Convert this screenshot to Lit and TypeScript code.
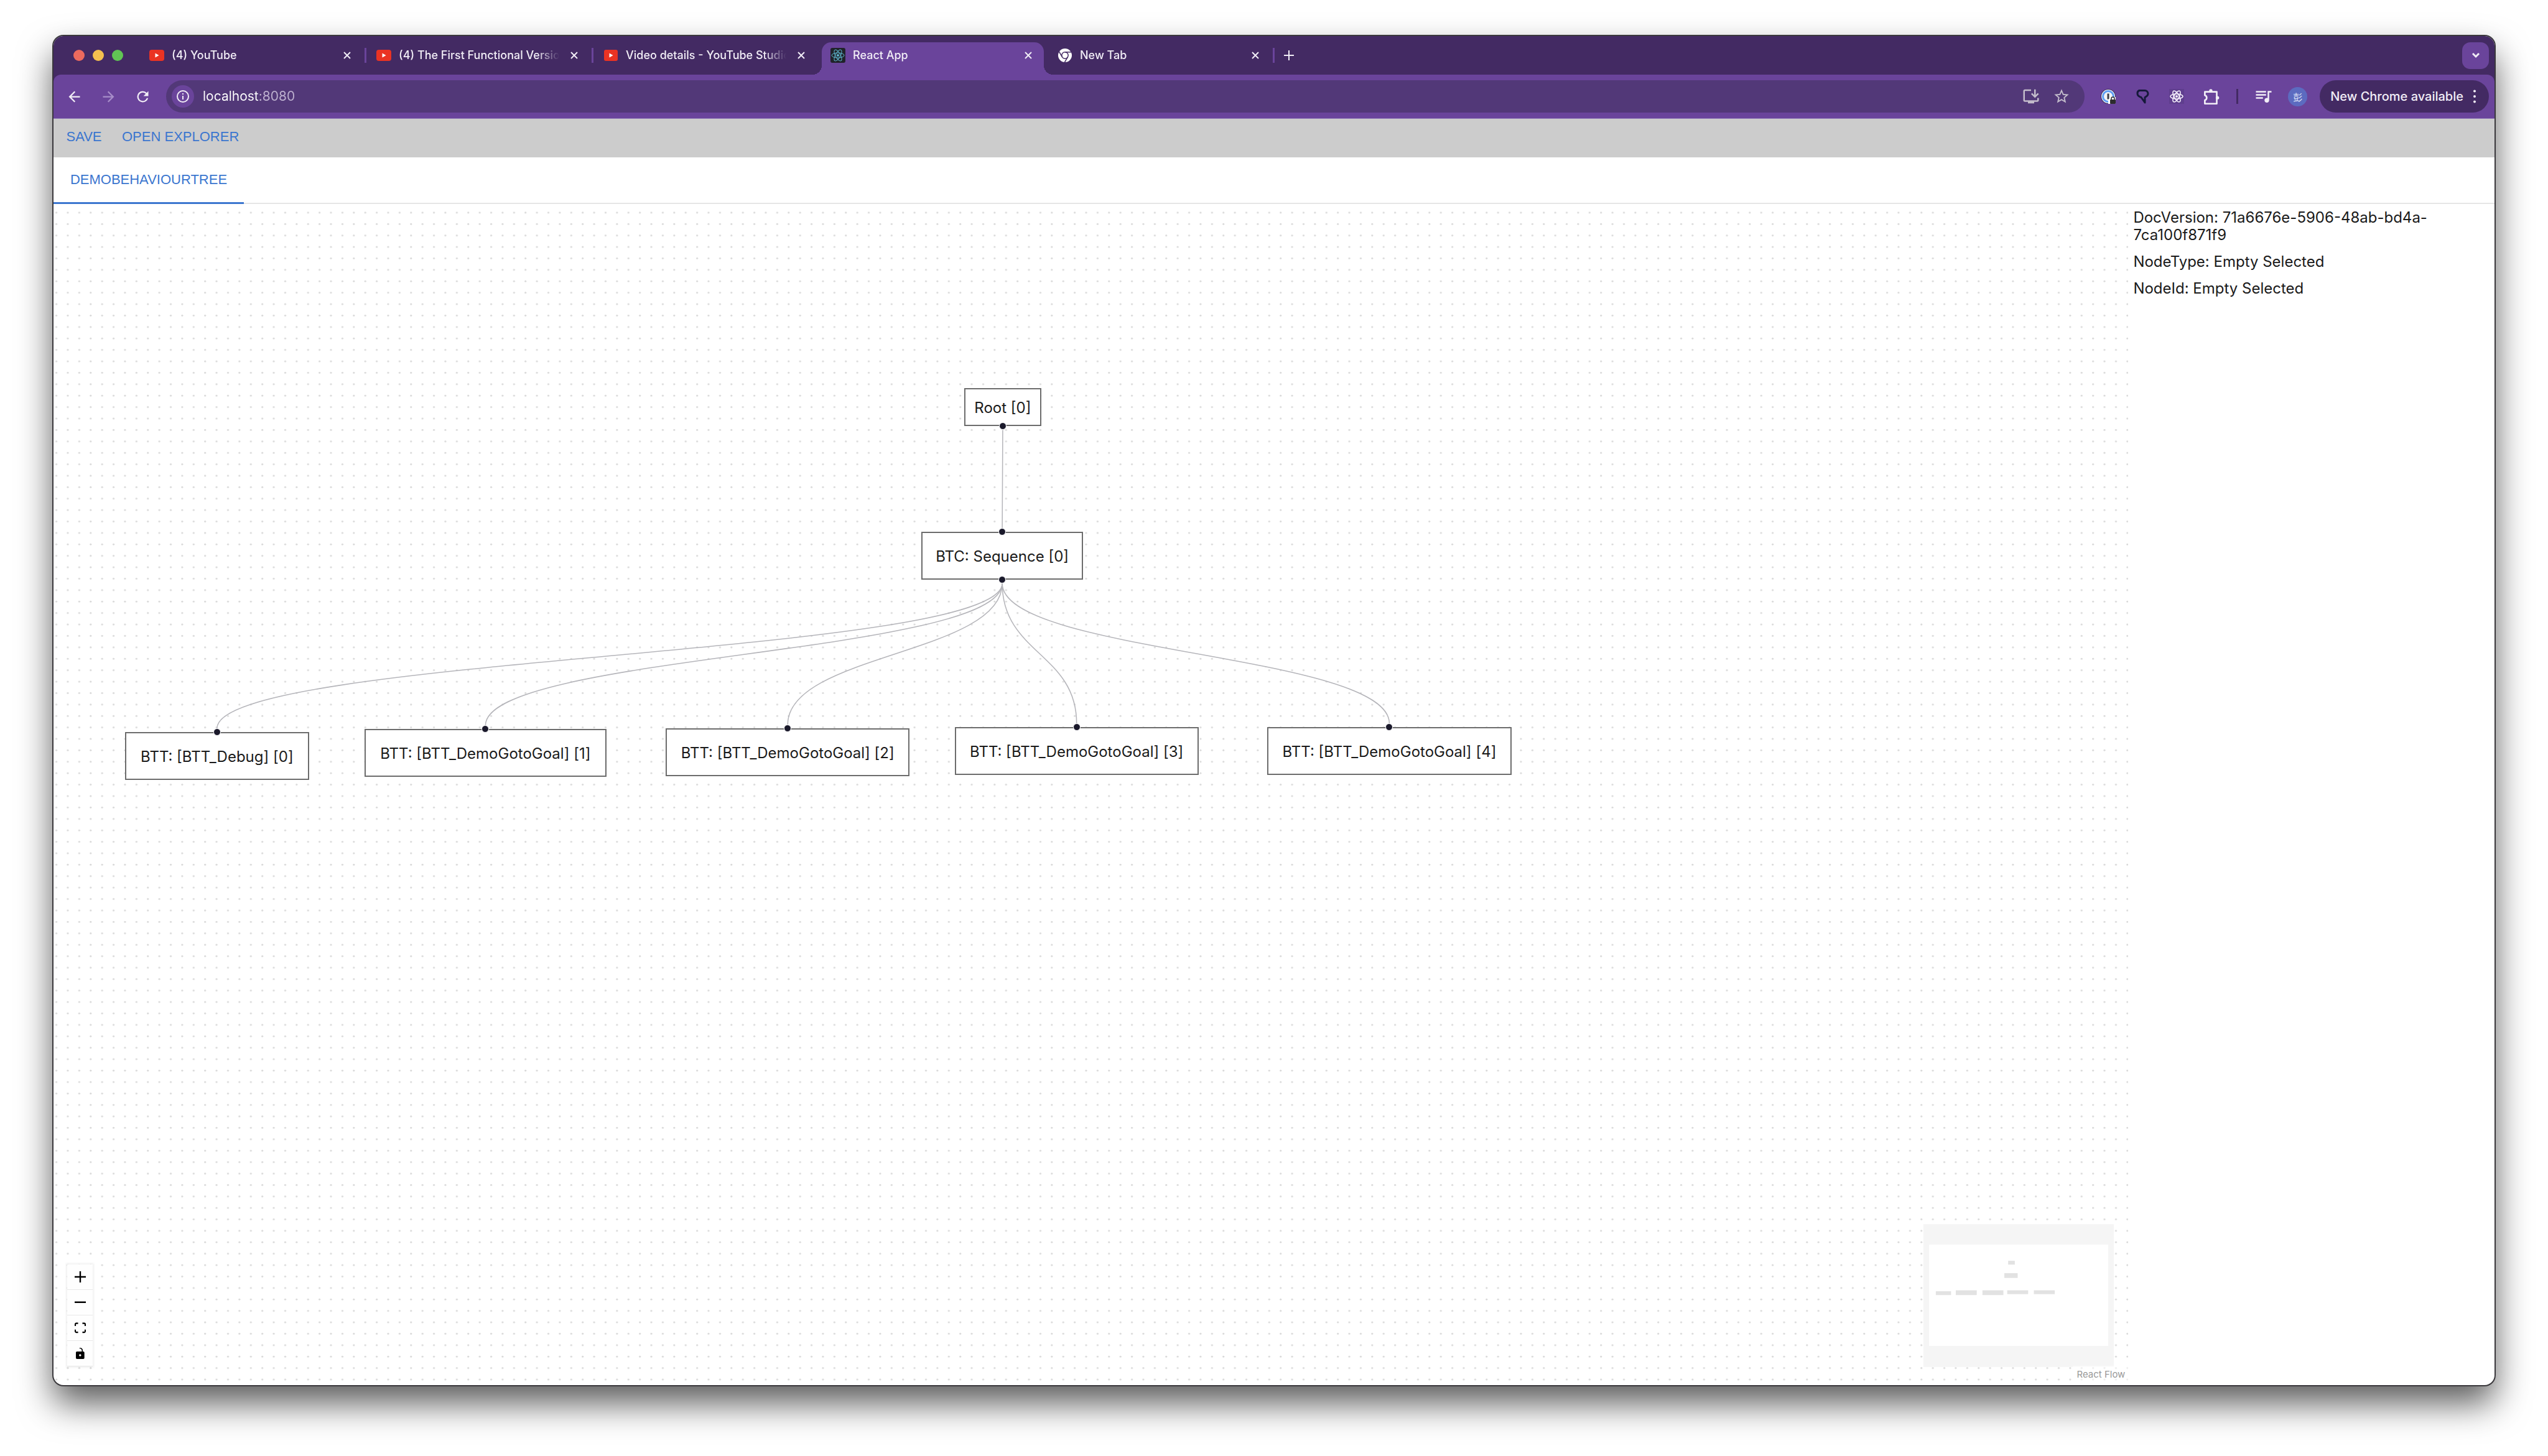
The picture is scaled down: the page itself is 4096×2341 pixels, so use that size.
import { LitElement, html, svg, css } from "lit";
import { customElement, state } from "lit/decorators.js";
import { classMap } from "lit/directives/class-map.js";
import { styleMap } from "lit/directives/style-map.js";

/* ---------- icons ---------- */

const solid = (d: string, cls = "i27") =>
  html`<svg class=${cls} viewBox="0 0 24 24" fill="currentColor" aria-hidden="true"><path d=${d}></path></svg>`;

const backIcon = solid("M20 11H7.83l5.59-5.59L12 4l-8 8 8 8 1.41-1.41L7.83 13H20z");
const forwardIcon = solid("M4 11h12.17l-5.59-5.59L12 4l8 8-8 8-1.41-1.41L16.17 13H4z");
const reloadIcon = solid(
  "M17.65 6.35A7.958 7.958 0 0 0 12 4a8 8 0 1 0 7.73 10h-2.08A6 6 0 1 1 12 6c1.66 0 3.14.69 4.22 1.78L13 11h7V4z"
);
const installIcon = solid(
  "M20 17H4V5h8V3H4c-1.1 0-2 .9-2 2v12c0 1.1.9 2 2 2h4v2h8v-2h4c1.1 0 2-.9 2-2v-3h-2v3zM17 14l5-5-1.41-1.41L18 10.17V3h-2v7.17l-2.59-2.58L12 9z",
  "i30"
);
const starIcon = solid(
  "M22 9.24l-7.19-.62L12 2 9.19 8.63 2 9.24l5.46 4.73L5.82 21 12 17.27 18.18 21l-1.63-7.03L22 9.24zM12 15.4l-3.76 2.27 1-4.28-3.32-2.88 4.38-.38L12 6.1l1.71 4.04 4.38.38-3.32 2.88 1 4.28L12 15.4z",
  "i28"
);
const playlistIcon = solid(
  "M15 5H2v2h13V5zm0 4H2v2h13V9zM2 15h9v-2H2v2zM17 5v9.18c-.31-.11-.65-.18-1-.18-1.66 0-3 1.34-3 3s1.34 3 3 3 3-1.34 3-3V7h3V5h-5z",
  "i30"
);
const infoIcon = html`<svg class="i24" viewBox="0 0 24 24" aria-hidden="true">
  <circle cx="12" cy="12" r="9" fill="none" stroke="currentColor" stroke-width="2"></circle>
  <rect x="11" y="11" width="2" height="6" fill="currentColor"></rect>
  <rect x="11" y="7" width="2" height="2" fill="currentColor"></rect>
</svg>`;
const closeIcon = html`<svg class="i12" viewBox="0 0 12 12" aria-hidden="true">
  <path d="M1 1l10 10M11 1L1 11" fill="none" stroke="currentColor" stroke-width="2"></path>
</svg>`;
const plusIcon = html`<svg class="i16" viewBox="0 0 16 16" aria-hidden="true">
  <path d="M8 0v16M0 8h16" fill="none" stroke="currentColor" stroke-width="2"></path>
</svg>`;
const chevronIcon = html`<svg class="i16" viewBox="0 0 16 16" aria-hidden="true">
  <path d="M3 5l5 5 5-5" fill="none" stroke="currentColor" stroke-width="3"></path>
</svg>`;
const dotsIcon = html`<svg class="i24" viewBox="0 0 24 24" fill="currentColor" aria-hidden="true">
  <circle cx="12" cy="3.500" r="2"></circle><circle cx="12" cy="12" r="2"></circle><circle cx="12" cy="20.500" r="2"></circle>
</svg>`;

const youtubeIcon = html`<svg class="i24" viewBox="0 0 24 24" aria-hidden="true">
  <rect x="0" y="3" width="24" height="18" rx="4" fill="#ea3323"></rect>
  <path d="M9.500 8.500v7l6-3.500z" fill="#fff"></path>
</svg>`;
const studioIcon = html`<svg class="i24" viewBox="0 0 24 24" aria-hidden="true">
  <rect x="1" y="3" width="22" height="18" rx="3" fill="#ea3323"></rect>
  <path d="M9.500 8.500v7l6-3.500z" fill="#fff"></path>
</svg>`;
const orbits = svg`
  <ellipse cx="12" cy="12" rx="10" ry="4"></ellipse>
  <ellipse cx="12" cy="12" rx="10" ry="4" transform="rotate(60 12 12)"></ellipse>
  <ellipse cx="12" cy="12" rx="10" ry="4" transform="rotate(120 12 12)"></ellipse>`;
const reactIcon = html`<svg class="i24" viewBox="0 0 24 24" aria-hidden="true">
  <rect width="24" height="24" rx="3" fill="#20232a"></rect>
  <g fill="none" stroke="#5fb8d0" stroke-width="1">${orbits}</g>
  <circle cx="12" cy="12" r="2" fill="#5fb8d0"></circle>
</svg>`;
const chromeIcon = html`<svg class="i24" viewBox="0 0 24 24" aria-hidden="true">
  <circle cx="12" cy="12" r="11" fill="#fff"></circle>
  <g fill="none" stroke="#432a63" stroke-width="1.500">
    <circle cx="12" cy="12" r="5.200"></circle>
    <path d="M12 6.800H22M7.500 14.600L2.500 6M16.500 14.600L11.500 23"></path>
  </g>
</svg>`;
const vaultIcon = html`<svg class="i24" viewBox="0 0 24 24" aria-hidden="true">
  <circle cx="12" cy="12" r="12" fill="#3b2b57"></circle>
  <circle cx="12" cy="12" r="11" fill="#f2f3f5"></circle>
  <circle cx="12" cy="12" r="8.500" fill="none" stroke="#5d9ef5" stroke-width="3"></circle>
  <rect x="10.500" y="7.500" width="3" height="9" fill="#3c3c44"></rect>
  <path d="M12 24v-6l4-5h8v11z" fill="#fff"></path>
  <rect x="15" y="17" width="9" height="7" rx="1" fill="#2c2c2c"></rect>
  <path d="M17 17v-1.500a2.500 2.500 0 0 1 5 0V17" fill="none" stroke="#2c2c2c" stroke-width="1.500"></path>
</svg>`;
const pinIcon = html`<svg class="i24" viewBox="0 0 24 24" aria-hidden="true">
  <path d="M7 2.500h9a5 5 0 0 1 5 5c0 3-2 4.500-5 6v8.500l-6-8.500c-3-1-6-3-6-6a5 5 0 0 1 3-5z"
    fill="none" stroke="#15193a" stroke-width="3" stroke-linejoin="round"></path>
</svg>`;
const devtoolsIcon = html`<svg class="i24" viewBox="0 0 24 24" aria-hidden="true">
  <rect width="24" height="24" fill="#5f3e8e"></rect>
  <g fill="none" stroke="#f0eaf8" stroke-width="1.600">${orbits}</g>
  <circle cx="12" cy="12" r="2" fill="#f0eaf8"></circle>
</svg>`;
const puzzleIcon = html`<svg class="i27" viewBox="0 0 24 24" aria-hidden="true">
  <path d="M3 5h17v17H3v-5c3.500-1 3.500-6 0-7z" fill="none" stroke="currentColor" stroke-width="2.400"
    stroke-linejoin="round"></path>
  <circle cx="11.500" cy="3.500" r="2.400" fill="currentColor"></circle>
  <circle cx="21" cy="13.500" r="2.400" fill="currentColor"></circle>
</svg>`;

const control = (box: string, d: string) =>
  html`<svg class="control-icon" viewBox=${box} fill="currentColor" aria-hidden="true"><path d=${d}></path></svg>`;

/* ---------- data ---------- */

interface Tab { title: string; icon: unknown; divider: boolean; active?: boolean; }

const TABS: Tab[] = [
  { title: "(4) YouTube", icon: youtubeIcon, divider: true },
  { title: "(4) The First Functional Version", icon: youtubeIcon, divider: true },
  { title: "Video details - YouTube Studio", icon: studioIcon, divider: false },
  { title: "React App", icon: reactIcon, divider: false, active: true },
  { title: "New Tab", icon: chromeIcon, divider: true },
];

/* Flow space: every node and edge is measured on this plane. */
const FLOW_W = 2176;
const FLOW_H = 1235;

interface FlowNode {
  id: string; label: string; x: number; y: number; w: number; h: number;
  parent?: string; compact?: boolean; leaf?: boolean;
}

const NODES: FlowNode[] = [
  { id: "root", label: "Root [0]", x: 955, y: 193, w: 81, h: 40, compact: true },
  { id: "seq", label: "BTC: Sequence [0]", x: 910, y: 344, w: 170, h: 50, parent: "root" },
  { id: "t0", label: "BTT: [BTT_Debug] [0]", x: 75, y: 554, w: 193, h: 50, parent: "seq", leaf: true },
  { id: "t1", label: "BTT: [BTT_DemoGotoGoal] [1]", x: 326, y: 551, w: 254, h: 50, parent: "seq", leaf: true },
  { id: "t2", label: "BTT: [BTT_DemoGotoGoal] [2]", x: 642, y: 550, w: 256, h: 50, parent: "seq", leaf: true },
  { id: "t3", label: "BTT: [BTT_DemoGotoGoal] [3]", x: 945, y: 549, w: 256, h: 50, parent: "seq", leaf: true },
  { id: "t4", label: "BTT: [BTT_DemoGotoGoal] [4]", x: 1273, y: 549, w: 256, h: 50, parent: "seq", leaf: true },
];

const MINI = [
  [178, 77, 14, 8], [170, 103, 28, 10], [26, 141, 32, 8], [68, 139, 44, 10],
  [124, 139, 44, 10], [176, 139, 44, 8], [232, 139, 44, 8],
];

const pct = (v: number, total: number) => `${(v / total) * 100}%`;

/* ---------- flow canvas ---------- */

@customElement("flow-canvas")
export class FlowCanvas extends LitElement {
  static styles = css`
    :host { display: block; position: relative; overflow: hidden; height: 100%;
      font-family: Inter, "Liberation Sans", sans-serif; color: #1a1a1a; }
    .plane { position: absolute; inset: 0; width: 100%; height: 100%; display: block; }
    .node { position: absolute; box-sizing: border-box; border: 2px solid #6c6c6c; background: #fff;
      padding: 24px 0 22px; text-align: center; font-size: 24px; line-height: 27px; white-space: nowrap; }
    .node.compact { padding: 16px 0 14px; }
    .handle { position: absolute; left: 50%; width: 12px; height: 12px; box-sizing: border-box;
      border: 1px solid #fff; border-radius: 50%; background: #1a192b; translate: -50% 0; }
    .handle.top { top: -8px; }
    .handle.bottom { bottom: -8px; }
    .controls { position: absolute; left: 22px; bottom: 23px; display: flex; flex-direction: column;
      box-shadow: 0 0 3px 2px rgba(0, 0, 0, 0.06); }
    .controls button { width: 41px; height: 41px; padding: 0; border: 0; border-bottom: 1px solid #e8e8e8;
      background: #fefefe; color: #000; display: flex; align-items: center; justify-content: center; }
    .control-icon { width: 18px; height: 18px; }
    .minimap { position: absolute; right: 23px; bottom: 22px; width: 306px; height: 230px; display: block; }
    .attribution { position: absolute; right: 0; bottom: 0; padding: 5px 5px 1px 6px; font-size: 15px; line-height: 18px;
      color: #999; background: rgba(255, 255, 255, 0.5); text-decoration: none; }
  `;

  private edge(n: FlowNode) {
    const p = NODES.find((m) => m.id === n.parent)!;
    const sx = p.x + p.w / 2, sy = p.y + p.h + 4;
    const tx = n.x + n.w / 2, ty = n.y - 4;
    const mid = (sy + ty) / 2;
    return svg`<path d="M${sx},${sy} C${sx},${mid} ${tx},${mid} ${tx},${ty}"></path>`;
  }

  render() {
    return html`
      <svg class="plane" viewBox="0 0 ${FLOW_W} ${FLOW_H}" preserveAspectRatio="xMinYMin slice" aria-hidden="true">
        <defs>
          <pattern id="dots" width="12" height="12" patternUnits="userSpaceOnUse">
            <circle cx="3" cy="9" r="1" fill="#d8d8d8"></circle>
          </pattern>
        </defs>
        <rect width=${FLOW_W} height=${FLOW_H} fill="url(#dots)"></rect>
        <g fill="none" stroke="#b5b5ba" stroke-width="1">
          ${NODES.filter((n) => n.parent).map((n) => this.edge(n))}
        </g>
      </svg>
      ${NODES.map((n) => html`
        <div class=${classMap({ node: true, compact: !!n.compact })}
          style=${styleMap({ left: pct(n.x, FLOW_W), top: pct(n.y, FLOW_H), width: pct(n.w, FLOW_W) })}>
          ${n.label}
          ${n.parent ? html`<span class="handle top"></span>` : ""}
          ${n.leaf ? "" : html`<span class="handle bottom"></span>`}
        </div>`)}
      <div class="controls">
        <button type="button" aria-label="zoom in">${control("0 0 32 32",
          "M32 18.133H18.133V32h-4.266V18.133H0v-4.266h13.867V0h4.266v13.867H32z")}</button>
        <button type="button" aria-label="zoom out">${control("0 0 32 5", "M0 0h32v4.2H0z")}</button>
        <button type="button" aria-label="fit view">${control("0 0 32 30",
          "M3.692 4.63c0-.53.4-.938.939-.938h5.215V0H4.708C2.13 0 0 2.054 0 4.63v5.216h3.692V4.631zM27.354 0h-5.2v3.692h5.17c.53 0 .984.4.984.939v5.215H32V4.631A4.624 4.624 0 0027.354 0zm.954 24.83c0 .532-.4.94-.939.94h-5.215v3.768h5.215c2.577 0 4.631-2.13 4.631-4.707v-5.139h-3.692v5.139zm-23.677.94c-.531 0-.939-.4-.939-.94v-5.138H0v5.139c0 2.577 2.13 4.707 4.708 4.707h5.138V25.77H4.631z")}</button>
        <button type="button" aria-label="toggle interactivity">${control("0 0 25 32",
          "M21.333 10.667H19.81V7.619C19.81 3.429 16.38 0 12.19 0c-4.114 1.828-1.37 2.133.305 2.438 1.676.305 4.42 2.59 4.42 5.181v3.048H3.047A3.056 3.056 0 000 13.714v15.238A3.056 3.056 0 003.048 32h18.285a3.056 3.056 0 003.048-3.048V13.714a3.056 3.056 0 00-3.048-3.047zM12.19 24.533a3.056 3.056 0 01-3.047-3.047 3.056 3.056 0 013.047-3.048 3.056 3.056 0 013.048 3.048 3.056 3.056 0 01-3.048 3.047z")}</button>
      </div>
      <svg class="minimap" viewBox="0 0 400 300" role="img" aria-label="Mini map">
        <rect width="400" height="300" fill="#f5f5f5"></rect>
        <rect x="12" y="43" width="376" height="213" fill="#fff"></rect>
        <g fill="#e2e2e2">
          ${MINI.map(([x, y, w, h]) => svg`<rect x=${x} y=${y} width=${w} height=${h}></rect>`)}
        </g>
      </svg>
      <a class="attribution" href="#react-flow">React Flow</a>
    `;
  }
}

/* ---------- browser window ---------- */

@customElement("app-root")
export class AppRoot extends LitElement {
  @state() private url = "localhost:8080";

  static styles = css`
    :host { display: flex; box-sizing: border-box; min-height: 100vh; padding: 58px 86px 114px;
      background: #fff; font-family: Inter, "Liberation Sans", sans-serif; }
    button { font: inherit; color: inherit; background: none; border: 0; padding: 0; }
    .i12 { width: 12px; height: 12px; }
    .i16 { width: 16px; height: 16px; }
    .i24 { width: 24px; height: 24px; }
    .i27 { width: 27px; height: 27px; }
    .i28 { width: 28px; height: 28px; }
    .i30 { width: 30px; height: 30px; }
    svg { display: block; flex: none; }

    .window { flex: 1; min-width: 0; display: flex; flex-direction: column; overflow: hidden;
      border-radius: 16px; background: #fff;
      box-shadow: 0 0 0 2px #3a383c, 0 29px 56px rgba(0, 0, 0, 0.65); }

    .strip { display: flex; align-items: center; height: 62px; padding: 0 9px 0 32px;
      background: #432a63; color: #f1edf6; font-size: 18px; font-weight: 500; }
    .lights { display: flex; gap: 13px; margin-right: 27px; }
    .light { width: 18px; height: 18px; border-radius: 50%; background: #ec6a5e; }
    .light.min { background: #f4bf4f; }
    .light.max { background: #61c554; }
    .tabs { display: flex; align-self: flex-end; }
    .tab { display: flex; width: 365px; padding-left: 1px; box-sizing: border-box; }
    .tab-body { position: relative; display: flex; align-items: center; width: 357px; height: 52px;
      box-sizing: border-box; padding: 0 13px 10px 14px; gap: 12px; border-radius: 15px 15px 0 0; }
    .active .tab-body { background: #6a449b; }
    .active .tab-body::before, .active .tab-body::after { content: ""; position: absolute; bottom: 0;
      width: 15px; height: 15px; }
    .active .tab-body::before { right: 100%; background: radial-gradient(circle at 0 0, transparent 15px, #6a449b 15px); }
    .active .tab-body::after { left: 100%; background: radial-gradient(circle at 100% 0, transparent 15px, #6a449b 15px); }
    .tab-pick { flex: 1; min-width: 0; display: flex; align-items: center; gap: 12px; }
    .tab-title { flex: 1; min-width: 0; overflow: hidden; white-space: nowrap; text-align: left; line-height: 24px;
      mask-image: linear-gradient(90deg, #000 222px, transparent 258px); }
    .tab-close { width: 24px; height: 24px; display: flex; align-items: center; justify-content: center; }
    .tab-divider { width: 3px; height: 24px; margin: 9px 0 0 3px; background: #6a449b; }
    .new-tab { width: 32px; height: 32px; margin-left: 6px; display: flex; align-items: center; justify-content: center; }
    .search-tabs { width: 43px; height: 43px; margin-left: auto; border-radius: 13px; background: #6a449b;
      display: flex; align-items: center; justify-content: center; }

    .under { background: #432a63; }
    .toolbar { display: flex; align-items: center; gap: 20px; height: 71px; box-sizing: border-box;
      padding: 0 9px 0 15px; border-bottom: 1px solid #8c74b4; border-radius: 12px 12px 0 0;
      background: #6a449b; color: #f1edf6; }
    .nav { display: flex; gap: 19px; }
    .nav button { width: 36px; height: 36px; display: flex; align-items: center; justify-content: center; }
    .nav button:disabled { color: #a78dc9; }
    .address { flex: 1; min-width: 0; display: flex; align-items: center; height: 52px; box-sizing: border-box;
      padding: 0 21px 0 9px; border-radius: 26px; background: #523878; }
    .site-info { width: 36px; height: 36px; border-radius: 50%; background: #6a449b; margin-right: 14px;
      display: flex; align-items: center; justify-content: center; }
    .url { flex: 1; min-width: 0; height: 32px; border: 0; padding: 0; outline: 0; font: 400 21px/32px Inter, sans-serif;
      background: linear-gradient(90deg, #fff 91px, #bdb0cf 91px); background-clip: text;
      -webkit-background-clip: text; -webkit-text-fill-color: transparent; }
    .address-tools { display: flex; gap: 17px; color: #c3bccb; }
    .tool { width: 32px; height: 32px; display: flex; align-items: center; justify-content: center; }
    .extensions { display: flex; align-items: center; gap: 23px; padding-left: 2px; }
    .ext-divider { width: 3px; height: 24px; margin: 0 2px; background: #432a63; }
    .avatar { width: 31px; height: 31px; border-radius: 50%; background: #5c6bc0; color: #dfe3f7;
      font: 15px/31px "Noto Sans CJK TC", sans-serif; text-align: center; }
    .update { display: flex; align-items: center; gap: 6px; height: 52px; padding: 0 11px 0 17px; border-radius: 26px;
      background: #432a63; font-size: 20px; font-weight: 500; white-space: nowrap; }

    .app-bar { display: flex; align-items: flex-start; height: 62px; background: #ccc; }
    .app-bar button { height: 56px; min-width: 98px; padding: 1px 12px 0; color: #3b76cf;
      font: 22px/36px "Liberation Sans", Arial, sans-serif; }
    .doc-tabs { display: flex; height: 75px; box-sizing: border-box; border-bottom: 2px solid #e6e6e6; }
    .doc-tab { min-width: 306px; padding: 0 25px; margin-bottom: -2px; border-bottom: 3px solid #3b76cf;
      color: #3b76cf; font: 22px/36px "Liberation Sans", Arial, sans-serif; box-sizing: border-box; }

    .workspace { flex: 1; display: grid; grid-template-columns: 85fr 15fr; padding-bottom: 7px; }
    .inspector { padding: 8px; font-size: 24px; line-height: 28px; color: #1a1a1a; min-width: 0; }
    .inspector p { margin: 0 0 15px; }
  `;

  render() {
    return html`
      <div class="window">
        <header class="strip">
          <div class="lights">
            <span class="light"></span><span class="light min"></span><span class="light max"></span>
          </div>
          <div class="tabs">
            ${TABS.map((t) => html`
              <div class=${classMap({ tab: true, active: !!t.active })}>
                <div class="tab-body">
                  <button class="tab-pick" type="button">
                    ${t.icon}<span class="tab-title">${t.title}</span>
                  </button>
                  <button class="tab-close" type="button" aria-label="Close tab">${closeIcon}</button>
                </div>
                ${t.divider ? html`<span class="tab-divider"></span>` : ""}
              </div>`)}
          </div>
          <button class="new-tab" type="button" aria-label="New tab">${plusIcon}</button>
          <button class="search-tabs" type="button" aria-label="Search tabs">${chevronIcon}</button>
        </header>

        <div class="under">
          <div class="toolbar">
            <nav class="nav">
              <button type="button" aria-label="Back">${backIcon}</button>
              <button type="button" aria-label="Forward" disabled>${forwardIcon}</button>
              <button type="button" aria-label="Reload">${reloadIcon}</button>
            </nav>
            <div class="address">
              <button class="site-info" type="button" aria-label="Site information">${infoIcon}</button>
              <input class="url" type="text" aria-label="Address" .value=${this.url}
                @input=${(e: Event) => (this.url = (e.target as HTMLInputElement).value)} />
              <div class="address-tools">
                <button class="tool" type="button" aria-label="Install">${installIcon}</button>
                <button class="tool" type="button" aria-label="Bookmark">${starIcon}</button>
              </div>
            </div>
            <div class="extensions">
              <button class="tool" type="button" aria-label="Password manager">${vaultIcon}</button>
              <button class="tool" type="button" aria-label="Pin">${pinIcon}</button>
              <button class="tool" type="button" aria-label="Developer tools">${devtoolsIcon}</button>
              <button class="tool" type="button" aria-label="Extensions">${puzzleIcon}</button>
              <span class="ext-divider"></span>
              <button class="tool" type="button" aria-label="Media">${playlistIcon}</button>
              <button class="avatar" type="button">彭</button>
            </div>
            <button class="update" type="button">New Chrome available ${dotsIcon}</button>
          </div>
        </div>

        <div class="app-bar">
          <button type="button">SAVE</button>
          <button type="button">OPEN EXPLORER</button>
        </div>
        <div class="doc-tabs">
          <button class="doc-tab" type="button">DEMOBEHAVIOURTREE</button>
        </div>
        <main class="workspace">
          <flow-canvas></flow-canvas>
          <aside class="inspector">
            <p>DocVersion: 71a6676e-5906-48ab-bd4a-7ca100f871f9</p>
            <p>NodeType: Empty Selected</p>
            <p>NodeId: Empty Selected</p>
          </aside>
        </main>
      </div>
    `;
  }
}
